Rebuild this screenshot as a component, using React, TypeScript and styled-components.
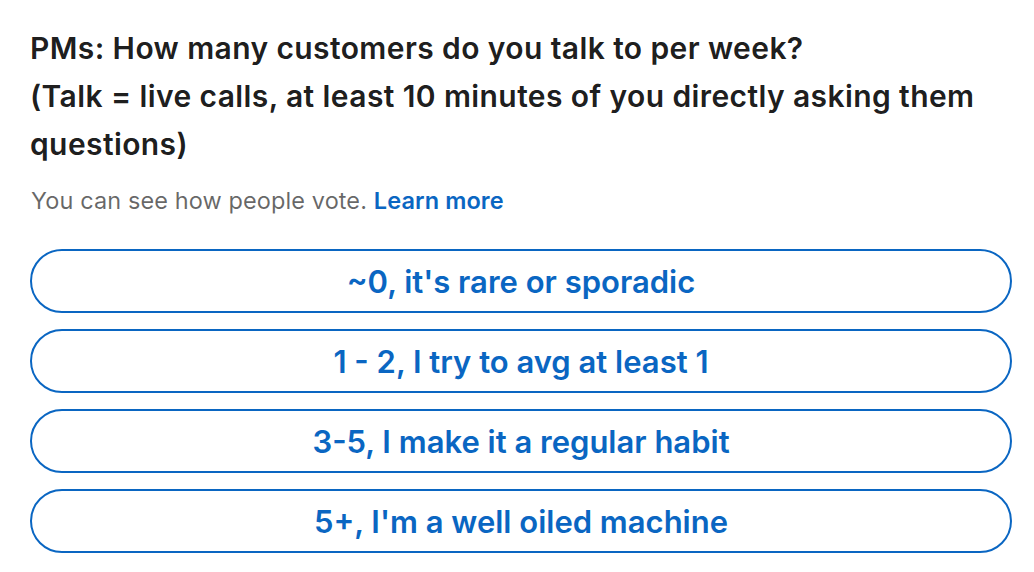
import React from 'react'
import styled, { createGlobalStyle } from 'styled-components'

const GlobalStyle = createGlobalStyle`
  body {
    margin: 0;
    background: #fff;
    font-family: Inter, "Liberation Sans", sans-serif;
  }
`

const Poll = styled.div`
  padding: 24px 22px 0 30px;
`

const Question = styled.h1`
  margin: 0;
  font-size: 30px;
  line-height: 48px;
  font-weight: 600;
  letter-spacing: 0.4px;
  color: rgba(0, 0, 0, 0.9);
`

const Note = styled.p`
  margin: 17px 0 0 1px;
  font-size: 23.5px;
  line-height: 32px;
  letter-spacing: 0.1px;
  color: rgba(0, 0, 0, 0.6);
`

const LearnMore = styled.a`
  color: #0a66c2;
  font-weight: 600;
  text-decoration: none;
`

const Options = styled.div`
  display: flex;
  flex-direction: column;
  gap: 16px;
  margin-top: 32px;
`

const Option = styled.button`
  height: 64px;
  border: 2px solid #0a66c2;
  border-radius: 32px;
  background: #fff;
  color: #0a66c2;
  font-family: inherit;
  font-size: 31px;
  font-weight: 600;
  cursor: pointer;
`

const options = [
  "~0, it's rare or sporadic",
  '1 - 2, I try to avg at least 1',
  '3-5, I make it a regular habit',
  "5+, I'm a well oiled machine",
]

const App = () => {
  return (
    <Poll>
      <GlobalStyle />
      <Question>
        PMs: How many customers do you talk to per week?
        <br />
        (Talk = live calls, at least 10 minutes of you directly asking them questions)
      </Question>
      <Note>
        You can see how people vote. <LearnMore href="#">Learn more</LearnMore>
      </Note>
      <Options>
        {options.map((label) => (
          <Option key={label}>{label}</Option>
        ))}
      </Options>
    </Poll>
  )
}

export default App
